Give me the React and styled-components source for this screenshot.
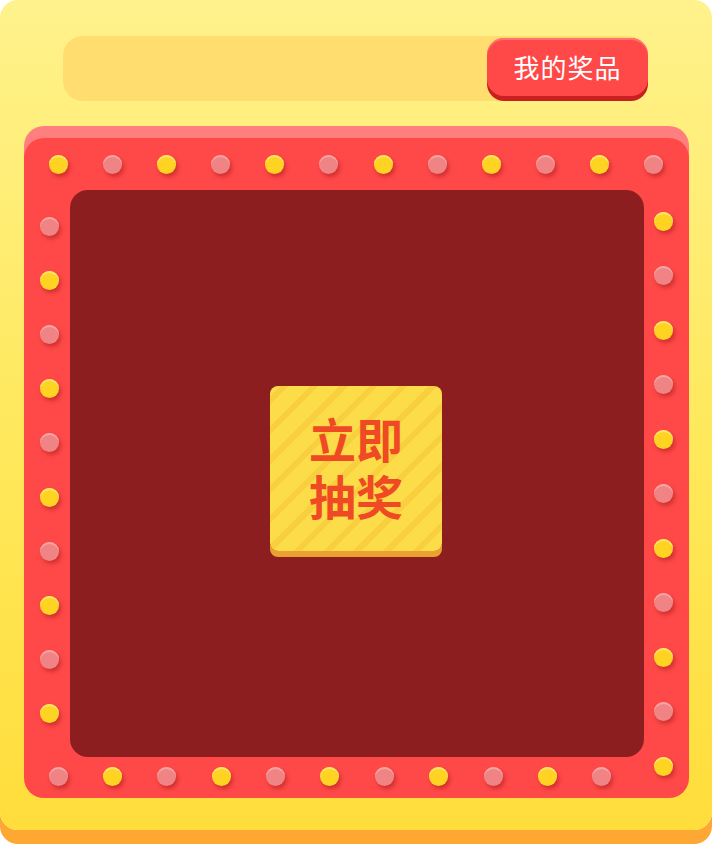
import { createGlobalStyle } from "styled-components";
import styled from "styled-components";

const GlobalStyle = createGlobalStyle`
  html, body {
    margin: 0;
    padding: 0;
    background: #ffffff;
  }
  * {
    box-sizing: border-box;
  }
`;

const Page = styled.div`
  width: 712px;
  height: 844px;
  font-family: "Noto Sans CJK SC", "Noto Sans", sans-serif;
`;

const Card = styled.div`
  height: 830px;
  border-radius: 18px;
  background: linear-gradient(180deg, #fff28c 0%, #ffe85a 55%, #ffdd3b 100%);
  box-shadow: 0 14px 0 #ffa733;
  padding: 36px 23px 0 24px;
  display: flex;
  flex-direction: column;
`;

const SearchBar = styled.div`
  height: 65px;
  margin: 0 41px 0 39px;
  border-radius: 20px;
  background: #ffdd6e;
  display: flex;
  justify-content: flex-end;
  align-items: flex-start;
  padding-top: 2px;
`;

const PrizeButton = styled.button`
  width: 161px;
  height: 58px;
  border: 0;
  border-radius: 17px;
  background: #ff4949;
  box-shadow: inset 0 2px 0 #ff7272, 0 5px 0 #c82020;
  color: #ffffff;
  font-family: inherit;
  font-size: 26px;
  letter-spacing: 1px;
  padding: 0 0 2px;
  cursor: pointer;
`;

const Frame = styled.div`
  position: relative;
  margin-top: 37px;
  height: 660px;
  border-radius: 20px;
  background: #ff4949;
  box-shadow: 0 -12px 0 #ff7f7f;
  padding: 52px 45px 41px 46px;
`;

const Board = styled.div`
  height: 100%;
  border-radius: 18px;
  background: #8c1e1f;
  display: flex;
  align-items: center;
  justify-content: center;
`;

const DrawButton = styled.button`
  width: 172px;
  height: 165px;
  margin: 0 2px 10px 0;
  border: 0;
  border-radius: 8px;
  background: repeating-linear-gradient(
    -45deg,
    #fcdc48 0px,
    #fcdc48 15px,
    #f8cf3e 15px,
    #f8cf3e 21px
  );
  box-shadow: 0 6px 0 #eba032;
  color: #ef4a24;
  font-family: inherit;
  font-size: 47px;
  font-weight: 700;
  padding: 0 0 6px;
  display: flex;
  flex-direction: column;
  align-items: center;
  justify-content: center;
  cursor: pointer;
`;

const DrawLine = styled.span`
  display: block;
  line-height: 57px;
`;

const DotTrack = styled.div`
  position: absolute;
  display: flex;
  flex-direction: ${(p) => (p.$vertical ? "column" : "row")};
  justify-content: space-between;
`;

const Dot = styled.span`
  width: 19px;
  height: 19px;
  border-radius: 50%;
  flex: none;
  background: ${(p) => (p.$lit ? "#ffd322" : "#f08484")};
  box-shadow: inset 0 2px 0 ${(p) => (p.$lit ? "#ffe46a" : "#f6a5a5")},
    2px 3px 4px rgba(150, 18, 18, 0.45);
`;

// 四条灯带：起始颜色、数量、位置
const tracks = [
  { key: "top", count: 12, litFirst: true, style: { top: 16.5, left: 24.5, width: 615 } },
  { key: "left", count: 10, litFirst: false, vertical: true, style: { top: 78.5, left: 15.5, height: 507 } },
  { key: "right", count: 11, litFirst: true, vertical: true, style: { top: 73.5, left: 629.5, height: 564 } },
  { key: "bottom", count: 11, litFirst: false, style: { top: 628.5, left: 24.5, width: 563 } },
];

function App() {
  return (
    <Page>
      <GlobalStyle />
      <Card>
        <SearchBar>
          <PrizeButton>我的奖品</PrizeButton>
        </SearchBar>
        <Frame>
          {tracks.map((t) => (
            <DotTrack key={t.key} $vertical={t.vertical} style={t.style}>
              {Array.from({ length: t.count }).map((_, i) => (
                <Dot key={i} $lit={t.litFirst ? i % 2 === 0 : i % 2 === 1} />
              ))}
            </DotTrack>
          ))}
          <Board>
            <DrawButton>
              <DrawLine>立即</DrawLine>
              <DrawLine>抽奖</DrawLine>
            </DrawButton>
          </Board>
        </Frame>
      </Card>
    </Page>
  );
}

export default App;
